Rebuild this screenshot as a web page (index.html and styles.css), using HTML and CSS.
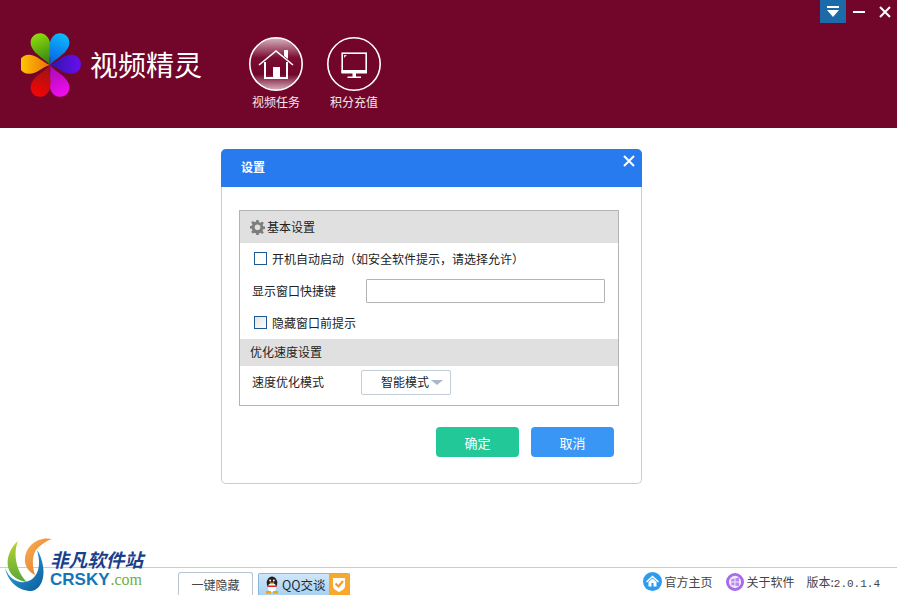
FILE: index.html
```html
<!DOCTYPE html>
<html lang="zh">
<head>
<meta charset="utf-8">
<title>视频精灵</title>
<link rel="stylesheet" href="styles.css">
</head>
<body>
<div class="app">
  <header class="top">
    <div class="brand">
      <svg class="flower" width="62" height="64" viewBox="-29 -32 62 64">
        <defs>
          <linearGradient id="p1" x1="0.5" y1="1" x2="0.5" y2="0"><stop offset="0" stop-color="#2a7c14"/><stop offset="1" stop-color="#8edc0a"/></linearGradient>
          <linearGradient id="p2" x1="0.5" y1="1" x2="0.5" y2="0"><stop offset="0" stop-color="#0a58e4"/><stop offset="1" stop-color="#0cbcfb"/></linearGradient>
          <linearGradient id="p3" x1="0.5" y1="1" x2="0.5" y2="0"><stop offset="0" stop-color="#2c18a8"/><stop offset="1" stop-color="#6a0cf0"/></linearGradient>
          <linearGradient id="p4" x1="0.5" y1="1" x2="0.5" y2="0"><stop offset="0" stop-color="#a00cb0"/><stop offset="1" stop-color="#f40cf0"/></linearGradient>
          <linearGradient id="p5" x1="0.5" y1="1" x2="0.5" y2="0"><stop offset="0" stop-color="#961414"/><stop offset="1" stop-color="#f60404"/></linearGradient>
          <linearGradient id="p6" x1="0.5" y1="1" x2="0.5" y2="0"><stop offset="0" stop-color="#ee6e08"/><stop offset="1" stop-color="#fdcb00"/></linearGradient>
        </defs>
        <path fill="url(#p1)" transform="rotate(-24)" d="M0 0C-2-8-9.500-15-9.500-24C-9.500-30-5-34 0-34C5-34 9.500-30 9.500-24C9.500-15 2-8 0 0Z"/>
        <path fill="url(#p2)" transform="rotate(24)" d="M0 0C-2-8-9.500-15-9.500-24C-9.500-30-5-34 0-34C5-34 9.500-30 9.500-24C9.500-15 2-8 0 0Z"/>
        <path fill="url(#p3)" transform="rotate(88)" d="M0 0C-2-7-9.500-13-9.500-21C-9.500-27-5-31 0-31C5-31 9.500-27 9.500-21C9.500-13 2-7 0 0Z"/>
        <path fill="url(#p4)" transform="rotate(156)" d="M0 0C-2-8-9.500-15-9.500-24C-9.500-30-5-34 0-34C5-34 9.500-30 9.500-24C9.500-15 2-8 0 0Z"/>
        <path fill="url(#p5)" transform="rotate(204)" d="M0 0C-2-8-9.500-15-9.500-24C-9.500-30-5-34 0-34C5-34 9.500-30 9.500-24C9.500-15 2-8 0 0Z"/>
        <path fill="url(#p6)" transform="rotate(272)" d="M0 0C-2-7-9.500-13-9.500-21C-9.500-27-5-31 0-31C5-31 9.500-27 9.500-21C9.500-13 2-7 0 0Z"/>
      </svg>
      <span class="brand-name">视频精灵</span>
    </div>
    <nav class="nav">
      <a class="nav-item">
        <svg width="56" height="56" viewBox="0 0 56 56">
          <defs>
            <linearGradient id="gloss" x1="0" y1="0" x2="0" y2="1">
              <stop offset="0" stop-color="#d9b3c0"/><stop offset="0.38" stop-color="#7a0e32"/><stop offset="0.7" stop-color="#72062a"/><stop offset="1" stop-color="#d8b4c1"/>
            </linearGradient>
          </defs>
          <circle cx="28" cy="28" r="26.2" fill="url(#gloss)" stroke="#fff" stroke-width="1.6"/>
          <path fill="none" stroke="#fff" stroke-width="1.6" d="M11 29 L28 15 L45 29"/>
          <path fill="#fff" d="M36 14h4v9l-4-3z"/>
          <path fill="none" stroke="#fff" stroke-width="2" d="M17 26v16h22V26"/>
          <rect x="25" y="31" width="7" height="11" fill="#fff"/>
        </svg>
        <span class="nav-label">视频任务</span>
      </a>
      <a class="nav-item">
        <svg width="56" height="56" viewBox="0 0 56 56">
          <circle cx="28" cy="28" r="26.2" fill="none" stroke="#fff" stroke-width="1.6"/>
          <rect x="16.200" y="17.200" width="24" height="19" fill="none" stroke="#fff" stroke-width="1.6"/>
          <path fill="#fff" d="M15.500 34h25.500v3.500H15.500zM26.500 37.500h3.500v3h-3.500zM21.500 40.500h13.500v1.600H21.500z"/>
          <path fill="#e8ccd6" d="M18 19h3l-3 3z"/>
        </svg>
        <span class="nav-label">积分充值</span>
      </a>
    </nav>
    <div class="win-btns">
      <button class="win-btn win-menu" type="button">
        <svg width="12" height="11" viewBox="0 0 12 11"><path fill="#fff" d="M0 0h12v2H0zM0 4h12L6 11z"/></svg>
      </button>
      <button class="win-btn" type="button">
        <svg width="12" height="2" viewBox="0 0 12 2"><path fill="#fff" d="M0 0h12v2H0z"/></svg>
      </button>
      <button class="win-btn" type="button">
        <svg width="12" height="12" viewBox="0 0 12 12"><path stroke="#fff" stroke-width="2" d="M1 1l10 10M11 1L1 11"/></svg>
      </button>
    </div>
  </header>

  <main class="content">
    <section class="dialog">
      <div class="dialog-head">
        <span class="dialog-title">设置</span>
        <svg class="dialog-close" width="12" height="12" viewBox="0 0 12 12"><path stroke="#fff" stroke-width="2" d="M1 1l10 10M11 1L1 11"/></svg>
      </div>
      <div class="dialog-body">
        <div class="panel">
          <div class="panel-head panel-head-first">
            <svg width="15" height="15" viewBox="0 0 16 16">
              <path fill="#7d7d7d" d="M6.800 0h2.400l.4 2.300 1.500.6 1.900-1.300 1.700 1.700-1.300 1.900.6 1.500 2.300.4v2.400l-2.300.4-.6 1.500 1.300 1.900-1.700 1.700-1.900-1.300-1.500.6-.4 2.300H6.800l-.4-2.300-1.500-.6L3 14.400l-1.700-1.700L2.600 10.800 2 9.300-.3 8.900V6.500L2 6.100l.6-1.500L1.300 2.700 3 1l1.900 1.300 1.500-.6z"/>
              <circle cx="8" cy="7.700" r="3" fill="#e0e0e0"/>
            </svg>
            <span class="panel-title">基本设置</span>
          </div>
          <label class="row row-check">
            <span class="check"></span>
            <span>开机自动启动（如安全软件提示，请选择允许）</span>
          </label>
          <div class="row">
            <span class="row-label">显示窗口快捷键</span>
            <input class="key-input" type="text">
          </div>
          <label class="row row-check">
            <span class="check check-soft"></span>
            <span>隐藏窗口前提示</span>
          </label>
          <div class="panel-head panel-head-second"><span class="panel-title">优化速度设置</span></div>
          <div class="row row-speed">
            <span class="row-label row-label-speed">速度优化模式</span>
            <div class="select">
              <span class="select-value">智能模式</span>
              <i class="select-arrow"></i>
            </div>
          </div>
        </div>
        <div class="actions">
          <button class="btn btn-ok" type="button">确定</button>
          <button class="btn btn-cancel" type="button">取消</button>
        </div>
      </div>
    </section>
  </main>

  <footer class="bottom">
    <div class="watermark">
      <svg class="wm-mark" width="54" height="56" viewBox="0 0 54 56">
        <defs>
          <linearGradient id="wmo" x1="0" y1="0" x2="1" y2="1"><stop offset="0" stop-color="#f9b25a"/><stop offset="1" stop-color="#e0741c"/></linearGradient>
          <linearGradient id="wmg" x1="0" y1="0" x2="0" y2="1"><stop offset="0" stop-color="#b8d430"/><stop offset="1" stop-color="#58a838"/></linearGradient>
          <linearGradient id="wmb" x1="0" y1="0" x2="1" y2="1"><stop offset="0" stop-color="#35b6e6"/><stop offset="1" stop-color="#0a5a9c"/></linearGradient>
        </defs>
        <path fill="url(#wmg)" d="M13 5C5 12 0 24 4 34C7 41 14 45 22 46C13 38 7 20 13 5Z"/>
        <path fill="url(#wmo)" d="M47 3C33 0 21 10 20 22C19 30 24 36 30 39C27 30 27 20 31 14C35 9 41 5 47 3Z"/>
        <path fill="url(#wmb)" d="M0 32C3 46 14 55 26 55C36 54 40 42 38 30C37 24 35 18 32 14C35 24 35 34 30 40C25 47 15 48 8 43C5 41 2 37 0 32Z"/>
      </svg>
      <div class="wm-text">
        <span class="wm-cn">非凡软件站</span>
        <span class="wm-en">CRSKY<span class="wm-com">.com</span></span>
      </div>
    </div>
    <div class="bottom-left">
      <button class="tab" type="button">一键隐藏</button>
      <div class="qq">
        <svg width="16" height="18" viewBox="0 0 16 18">
          <ellipse cx="8" cy="7" rx="5.300" ry="6.500" fill="#222"/>
          <ellipse cx="8" cy="11.500" rx="4" ry="4.500" fill="#fff"/>
          <circle cx="6.200" cy="4.500" r="1" fill="#fff"/>
          <circle cx="9.800" cy="4.500" r="1" fill="#fff"/>
          <path fill="#f3a012" d="M5.500 6.500h5L8 8.500z"/>
          <path fill="#d8221c" d="M3.500 9.500h9v1.600h-9z"/>
          <path fill="#f3a012" d="M2 15h5v2.500H2zM9 15h5v2.500H9z"/>
        </svg>
        <span class="qq-text">QQ交谈</span>
        <span class="qq-badge">
          <svg width="14" height="15" viewBox="0 0 14 15">
            <path fill="#fff" d="M1 1h12v8c0 3-3 4.500-6 6-3-1.500-6-3-6-6z"/>
            <path fill="none" stroke="#f49a1e" stroke-width="2" d="M3.500 6.500L6.500 9.500L11 4"/>
          </svg>
        </span>
      </div>
    </div>
    <div class="bottom-right">
      <a class="foot-link">
        <svg width="19" height="19" viewBox="0 0 19 19">
          <circle cx="9.500" cy="9.500" r="9.500" fill="#2f9bef"/>
          <path fill="none" stroke="#fff" stroke-width="1.600" d="M3.500 10L9.500 4.500L15.500 10"/>
          <path fill="#fff" d="M5.500 10L9.500 6.500l4 3.500v4.500h-3V11h-2v3.500h-3z"/>
        </svg>
        <span>官方主页</span>
      </a>
      <a class="foot-link">
        <svg width="18" height="18" viewBox="0 0 19 19">
          <circle cx="9.500" cy="9.500" r="8" fill="#f1e6fb" stroke="#a56bea" stroke-width="3"/>
          <path fill="#b98cf0" d="M5.500 6.500l3.500-.8v3.300H5.500zM10 5.500l3.800-.7v4.200H10zM5.500 10H9v3.300l-3.500-.6zM10 10h3.800v4L10 13.400z"/>
        </svg>
        <span>关于软件</span>
      </a>
      <span class="version">版本:<span class="version-num">2.0.1.4</span></span>
    </div>
  </footer>
</div>
</body>
</html>
```

FILE: styles.css
```css
* { box-sizing: border-box; }
html, body { margin: 0; padding: 0; }
body {
  font-family: "Noto Sans CJK SC", "Liberation Sans", sans-serif;
  font-size: 12px;
  color: #333;
  background: #fff;
}
button { font-family: inherit; }

.app {
  width: 897px;
  height: 595px;
  display: flex;
  flex-direction: column;
  overflow: hidden;
  position: relative;
}

/* header */
.top {
  height: 128px;
  flex: none;
  background: #72062a;
  display: flex;
  align-items: flex-start;
  padding: 33px 0 0 21px;
  position: relative;
  color: #fff;
}
.brand { display: flex; align-items: center; width: 227px; }
.flower { flex: none; }
.brand-name {
  font-size: 28px;
  line-height: 40px;
  margin: -3px 0 0 7px;
  font-weight: 400;
  white-space: nowrap;
}
.nav { display: flex; gap: 22px; margin-top: 3px; }
.nav-item {
  display: flex;
  flex-direction: column;
  align-items: center;
  width: 56px;
}
.nav-label {
  font-size: 12px;
  line-height: 17px;
  margin-top: 1px;
  white-space: nowrap;
  color: #f6e6ec;
}
.win-btns {
  position: absolute;
  top: 0;
  right: 0;
  display: flex;
}
.win-btn {
  width: 26px;
  height: 23px;
  padding: 0;
  border: 0;
  background: transparent;
  display: flex;
  align-items: center;
  justify-content: center;
}
.win-btn:last-child { width: 25px; }
.win-menu { background: #1c6aa8; }

/* content */
.content { flex: 1; min-height: 0; padding: 21px 0 0 221px; }
.dialog {
  width: 421px;
  height: 335px;
  border: 1px solid #c0d1d7;
  border-top: 0;
  border-radius: 5px;
  background: #fff;
}
.dialog-head {
  margin: 0 -1px;
  height: 38px;
  background: #287bef;
  border-radius: 5px 5px 0 0;
  color: #fff;
  display: flex;
  align-items: center;
  justify-content: space-between;
  padding: 0 7px 4px 20px;
  font-weight: 700;
  font-size: 12px;
}
.dialog-close { margin-bottom: 11px; }
.dialog-body { padding: 23px 22px 0 17px; }
.panel { border: 1px solid #b4b4b4; height: 196px; }
.panel-head {
  background: #e0e0e0;
  display: flex;
  align-items: center;
  gap: 2px;
  color: #222;
  padding-left: 10px;
}
.panel-title { margin-top: -2px; }
.panel-head-first { height: 32px; }
.panel-head-second { height: 27px; }
.row { display: flex; align-items: center; color: #222; height: 32px; padding-left: 12px; }
.row-check { padding: 0 0 1px 14px; gap: 5px; }
.row-label { width: 114px; flex: none; margin-top: -2px; }
.row-label-speed { width: 109px; }
.row-speed { height: 39px; padding-bottom: 6px; }
.check {
  width: 13px;
  height: 13px;
  border: 1px solid #1d5a94;
  background: #fff;
  flex: none;
}
.check-soft { background: linear-gradient(135deg, #e4e4e4, #fdfdfd); }
.key-input {
  width: 239px;
  height: 24px;
  border: 1px solid #b4b4b4;
  background: #fff;
  padding: 0;
  outline: 0;
  border-radius: 1px;
}
.select {
  width: 90px;
  height: 25px;
  border: 1px solid #c2ccd6;
  border-radius: 2px;
  display: flex;
  align-items: center;
  padding-left: 19px;
  gap: 2px;
  white-space: nowrap;
}
.select-value { margin-top: -2px; }
.select-arrow {
  width: 0;
  height: 0;
  border: 6px solid transparent;
  border-top: 5px solid #a9b7c9;
  border-bottom: 0;
}
.actions {
  display: flex;
  justify-content: flex-end;
  gap: 12px;
  margin-top: 21px;
  padding-right: 5px;
}
.btn {
  width: 83px;
  height: 30px;
  border: 0;
  border-radius: 4px;
  color: #fff;
  font-size: 13px;
  padding: 0;
}
.btn-ok { background: #22c898; }
.btn-cancel { background: #3a96f4; }

/* footer */
.bottom {
  height: 28px;
  flex: none;
  border-top: 1px solid #bccfe0;
  display: flex;
  justify-content: space-between;
  align-items: flex-end;
  position: relative;
  padding: 0 17px 0 178px;
}
.watermark {
  position: absolute;
  left: 5px;
  bottom: 3px;
  width: 145px;
  height: 56px;
  display: flex;
}
.wm-mark { flex: none; }
.wm-text {
  display: flex;
  flex-direction: column;
  margin: 13px 0 0 -9px;
  white-space: nowrap;
}
.wm-cn {
  font-size: 18.6px;
  line-height: 19px;
  font-weight: 700;
  font-style: italic;
  color: #1a3f8c;
}
.wm-en {
  font-family: "Liberation Sans", sans-serif;
  font-size: 17px;
  line-height: 14px;
  margin: 5px 0 0;
  font-weight: 700;
  color: #1476b8;
}
.wm-com {
  font-family: "Liberation Serif", serif;
  font-weight: 400;
  font-size: 16px;
  color: #6cb048;
  margin-left: 1px;
}
.bottom-left { display: flex; align-items: flex-end; gap: 5px; }
.tab {
  width: 75px;
  height: 23px;
  border: 1px solid #b6c6d4;
  border-bottom: 0;
  border-radius: 3px 3px 0 0;
  background: #fff;
  color: #444;
  font-size: 12px;
  padding: 0;
}
.qq {
  width: 92px;
  height: 22px;
  border: 1px solid #8ab6dc;
  border-bottom: 0;
  border-radius: 2px 2px 0 0;
  background: linear-gradient(#cfe6f8, #a9d2f0);
  display: flex;
  align-items: center;
  padding-left: 5px;
  gap: 2px;
  overflow: hidden;
  color: #1c2c40;
}
.qq-text { white-space: nowrap; font-size: 12.5px; flex: 1; }
.qq-badge {
  width: 20px;
  height: 22px;
  background: #f8a82c;
  display: flex;
  align-items: center;
  justify-content: center;
  flex: none;
}
.bottom-right {
  display: flex;
  align-items: center;
  height: 27px;
  color: #444;
}
.foot-link { display: flex; align-items: center; gap: 2px; margin-right: 14px; white-space: nowrap; }
.foot-link:nth-child(2) { margin-right: 12px; }
.version { font-size: 12px; white-space: nowrap; }
.version-num { font-family: "Liberation Mono", monospace; font-size: 11px; }
```
